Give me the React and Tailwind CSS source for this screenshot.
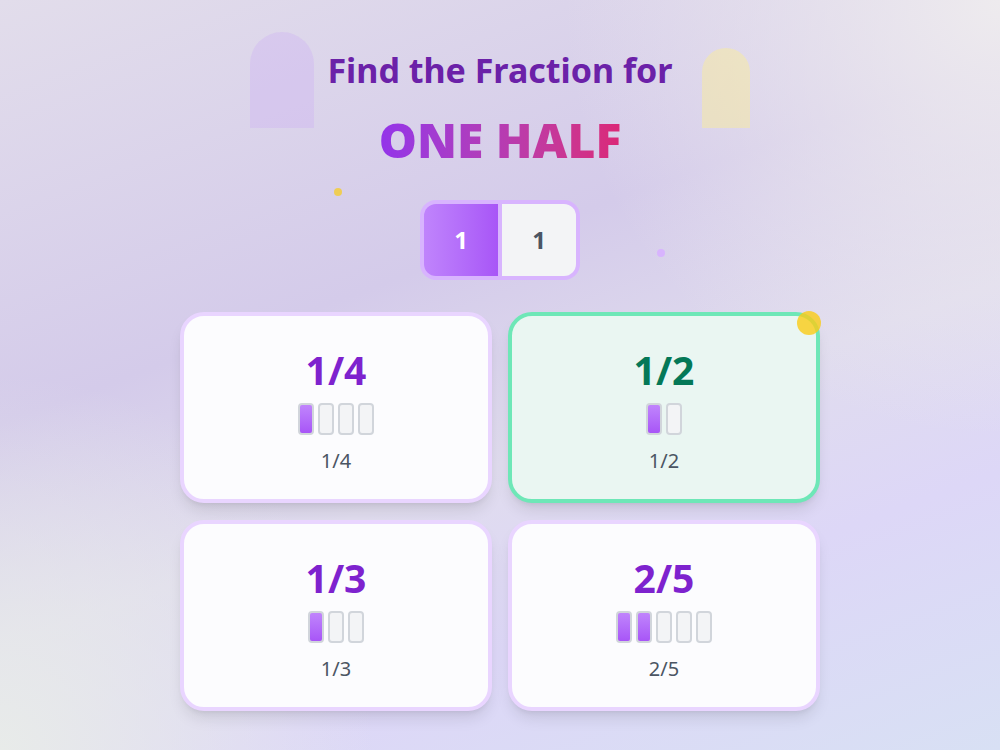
import { useState } from 'react';

const target = { label: 'ONE HALF', numerator: 1, denominator: 2 };

const options = [
  { id: 'a', numerator: 1, denominator: 4 },
  { id: 'b', numerator: 1, denominator: 2 },
  { id: 'c', numerator: 1, denominator: 3 },
  { id: 'd', numerator: 2, denominator: 5 },
];

function PieceBars({ numerator, denominator }) {
  return (
    <div className="flex gap-1 justify-center">
      {Array.from({ length: denominator }).map((_, i) => (
        <div
          key={i}
          className={
            i < numerator
              ? 'w-4 h-8 rounded border-2 border-[#d1d5db] bg-gradient-to-b from-[#c084fc] to-[#a855f7]'
              : 'w-4 h-8 rounded border-2 border-[#d1d5db] bg-[#f3f4f6]'
          }
        />
      ))}
    </div>
  );
}

function OptionCard({ option, selected, onPick }) {
  const text = `${option.numerator}/${option.denominator}`;
  return (
    <button
      onClick={() => onPick(option.id)}
      className={
        selected
          ? 'relative h-[191px] pt-8 rounded-3xl border-4 border-[#6ee7b7] bg-[#eaf6f2] shadow-lg flex flex-col items-center'
          : 'relative h-[191px] pt-8 rounded-3xl border-4 border-[#e9d5ff] bg-[#fcfcfe] shadow-lg flex flex-col items-center'
      }
    >
      {selected && (
        <span className="absolute -top-[5px] -right-[5px] w-6 h-6 rounded-full bg-[#facc15]/80" />
      )}
      <span
        className={
          selected
            ? 'text-[39px] leading-[44px] font-bold text-[#047857]'
            : 'text-[39px] leading-[44px] font-bold text-[#7e22ce]'
        }
      >
        {text}
      </span>
      <div className="mt-[11px]">
        <PieceBars numerator={option.numerator} denominator={option.denominator} />
      </div>
      <span className="mt-3 text-[20px] leading-7 text-[#4b5563]">{text}</span>
    </button>
  );
}

export default function App() {
  const [picked, setPicked] = useState('b');

  return (
    <div
      className="relative min-h-screen w-full overflow-hidden bg-[radial-gradient(circle_at_0%_100%,#e8ebe9_0%,transparent_30%),radial-gradient(circle_at_100%_0%,#eeebee_0%,transparent_35%),linear-gradient(160deg,#e2ddeb_0%,#d4cbea_38%,#e0dcee_58%,#ddd7f7_75%,#d8e0f4_100%)]"
      style={{ fontFamily: '"Noto Sans", "Open Sans", sans-serif' }}
    >
      {/* decorative arches and dots */}
      <div className="absolute left-[250px] top-[32px] w-16 h-24 rounded-t-full bg-[#c9a8f5]/30" />
      <div className="absolute left-[702px] top-[48px] w-12 h-20 rounded-t-full bg-[#fef08a]/40" />
      <div className="absolute left-[334px] top-[188px] w-2 h-2 rounded-full bg-[#facc15]/70" />
      <div className="absolute left-[657px] top-[249px] w-2 h-2 rounded-full bg-[#d8b4fe]" />

      <div className="relative flex flex-col items-center pt-[50px]">
        <h1 className="text-[34px] leading-[40px] font-bold text-[#6b21a8]">Find the Fraction for</h1>
        <h2 className="mt-[25px] text-[48px] leading-[50px] font-black bg-gradient-to-r from-[#9333ea] to-[#db2777] bg-clip-text text-transparent">
          {target.label}
        </h2>

        <div className="mt-[35px] flex gap-1 p-1 w-[160px] h-[80px] rounded-2xl bg-[#d8b4fe]">
          <div className="flex-1 rounded-l-xl bg-gradient-to-r from-[#c084fc] to-[#a855f7] flex items-center justify-center text-[24px] font-bold text-white">
            {target.numerator}
          </div>
          <div className="flex-1 rounded-r-xl bg-[#f3f4f6] flex items-center justify-center text-[24px] font-bold text-[#4b5563]">
            {target.numerator}
          </div>
        </div>

        <div className="mt-[32px] w-[640px] grid grid-cols-2 gap-x-4 gap-y-[17px]">
          {options.map((o) => (
            <OptionCard key={o.id} option={o} selected={picked === o.id} onPick={setPicked} />
          ))}
        </div>
      </div>
    </div>
  );
}
